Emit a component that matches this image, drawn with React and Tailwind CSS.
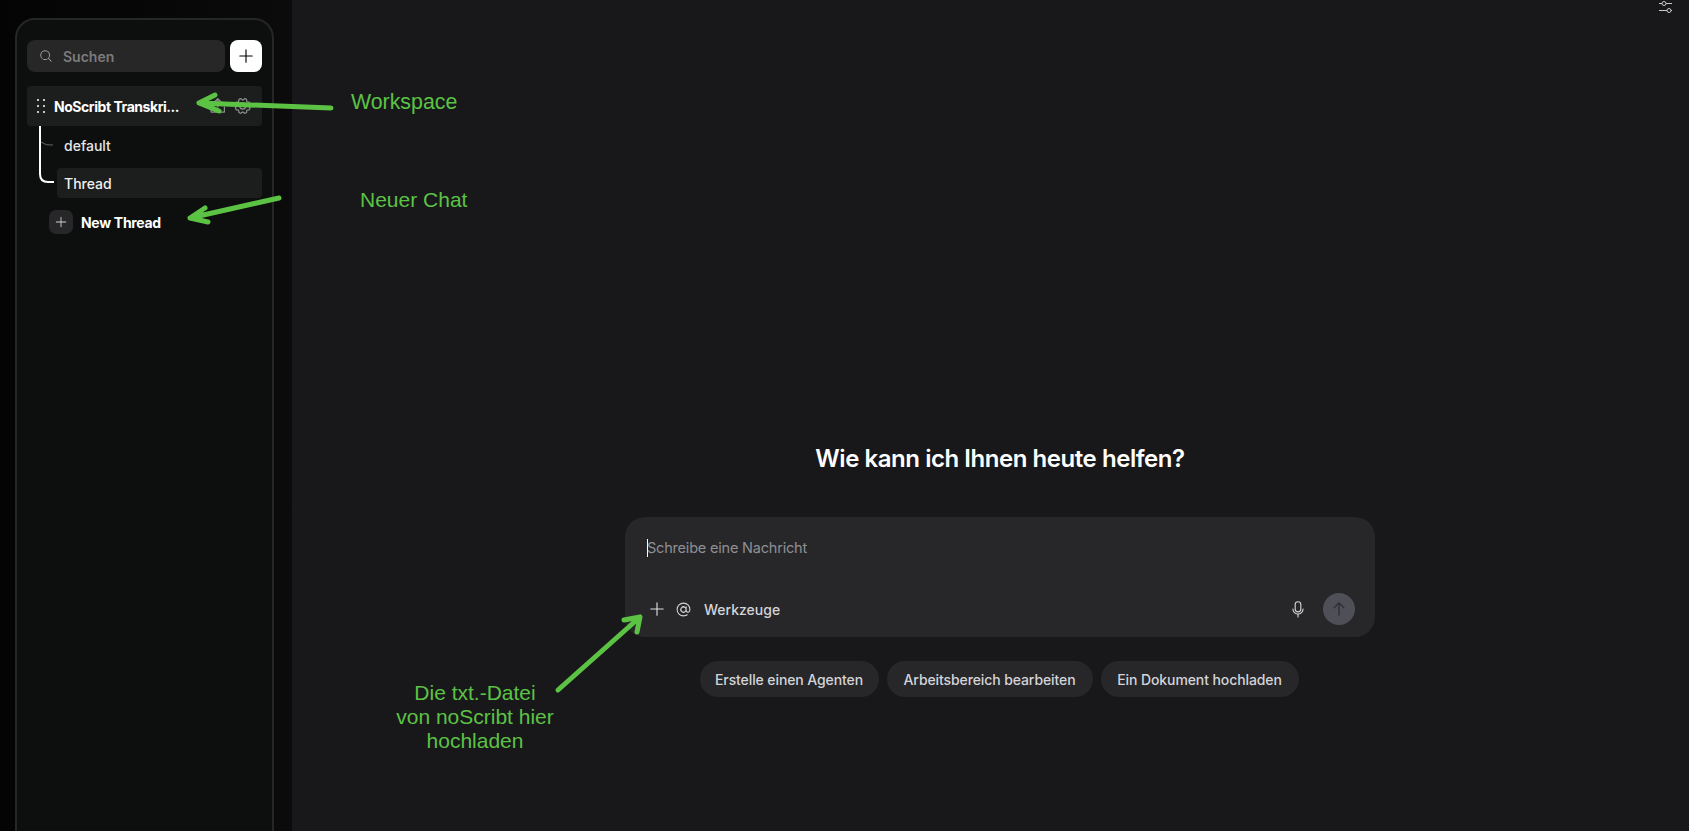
import React from "react";
import {
  PiMagnifyingGlass,
  PiPlus,
  PiUploadSimple,
  PiGear,
  PiAt,
  PiMicrophone,
  PiArrowUp,
} from "react-icons/pi";

const font = "font-['Inter','Noto_Sans',sans-serif]";

function Grip() {
  return (
    <div className="grid grid-cols-2 gap-x-[4px] gap-y-[4px] w-[8px] shrink-0">
      {[0, 1, 2, 3, 4, 5].map((i) => (
        <span key={i} className="w-[2px] h-[2px] bg-white rounded-full" />
      ))}
    </div>
  );
}

function Sliders() {
  return (
    <svg width="14" height="14" viewBox="0 0 14 14" fill="none" stroke="#c9c9cc" strokeWidth="1">
      <path d="M0 3.5h3M7 3.5h6M0 10.5h8M12 10.5h1" />
      <circle cx="5" cy="3.5" r="2" />
      <circle cx="10" cy="10.5" r="2" />
    </svg>
  );
}

function Sidebar() {
  return (
    <aside className="w-[292px] shrink-0 h-full bg-gradient-to-r from-[#040404] to-[#0b0b0b] pl-[15px] pr-[18px] pt-[18px]">
      <div className="h-[900px] rounded-[20px] border-2 border-[#252726] bg-[#0c0f0e] pt-[20px] px-[10px]">
        <div className="flex gap-[5px]">
          <div className="flex-1 h-[32px] rounded-[8px] bg-[#272727] flex items-center pl-[12px] gap-[10px]">
            <PiMagnifyingGlass className="text-[#a3a3a3] text-[14px]" />
            <span className="text-[14px] font-semibold text-[#7c7c7c]">Suchen</span>
          </div>
          <div className="w-[32px] h-[32px] rounded-[8px] bg-white flex items-center justify-center">
            <PiPlus className="text-black text-[18px]" />
          </div>
        </div>

        <div className="mt-[14px] h-[40px] rounded-[4px] bg-[#1c1e1d] flex items-center pl-[10px] pr-[10px]">
          <Grip />
          <span className="ml-[9px] text-[14px] font-bold text-white tracking-[-0.45px] w-[132px] whitespace-nowrap">NoScribt Transkri...</span>
          <PiUploadSimple className="ml-[26px] text-[#8f8f8f] text-[20px]" />
          <PiGear className="ml-[5px] text-[#8f8f8f] text-[20px]" />
        </div>

        <div className="relative">
          <svg className="absolute left-[12px] top-0" width="20" height="60" viewBox="0 0 20 60" fill="none">
            <path d="M1 0v48q0 8 8 8h6" stroke="#fff" strokeWidth="2" />
            <path d="M2 16q5 4 12 3" stroke="#666" strokeWidth="1" />
          </svg>
          <div className="ml-[30px] h-[42px] flex items-center pl-[7px] pb-[4px] text-[14px] font-medium text-[#e6e6e6]">default</div>
          <div className="ml-[30px] h-[30px] rounded-[4px] bg-[#1c1e1d] flex items-center pl-[7px] text-[14px] font-medium text-[#f0f0f0]">Thread</div>
        </div>

        <div className="mt-[12px] ml-[22px] flex items-center gap-[8px]">
          <div className="w-[24px] h-[24px] rounded-[7px] bg-[#272729] flex items-center justify-center">
            <PiPlus className="text-[#d4d4d4] text-[14px]" />
          </div>
          <span className="text-[14px] font-bold text-white tracking-[-0.3px]">New Thread</span>
        </div>
      </div>
    </aside>
  );
}

function Chip({ width, children }) {
  return (
    <div className={`h-[36px] ${width} rounded-full bg-[#27272a] flex items-center justify-center text-[14px] font-medium text-[#d4d4d8] tracking-[-0.1px] whitespace-nowrap`}>
      {children}
    </div>
  );
}

function Main() {
  return (
    <main className="flex-1 h-full bg-[#18181b] flex flex-col">
      <div className="h-[14px] flex justify-end pr-[16px] overflow-hidden">
        <Sliders />
      </div>
      <div className="flex flex-col items-center pt-[429px] pl-[19px]">
        <h1 className="text-[24px] leading-[32px] font-semibold text-white tracking-[-0.45px]">Wie kann ich Ihnen heute helfen?</h1>
        <div className="mt-[42px] w-[750px] h-[120px] rounded-[20px] bg-[#27272a] pl-[22px] pr-[20px] pt-[21px] flex flex-col">
          <div className="flex items-center h-[20px] text-[14.5px] text-[#8f8f94] tracking-[-0.2px]">
            <span className="w-px h-[18px] bg-white -mr-px" />
            Schreibe eine Nachricht
          </div>
          <div className="mt-[35px] flex items-center h-[32px]">
            <PiPlus className="ml-px text-[#e0e0e0] text-[18px]" />
            <PiAt className="ml-[9px] text-[#d4d4d8] text-[17px]" />
            <span className="ml-[12px] text-[14px] font-medium text-[#d4d4d8] tracking-[0px]">Werkzeuge</span>
            <PiMicrophone className="ml-auto text-[#d4d4d8] text-[18px]" />
            <div className="ml-[16px] w-[32px] h-[32px] rounded-full bg-[#4f4f58] flex items-center justify-center">
              <PiArrowUp className="text-[#2a2a2e] text-[18px]" />
            </div>
          </div>
        </div>
        <div className="mt-[24px] mr-[2px] flex gap-[8px]">
          <Chip width="w-[179px]">Erstelle einen Agenten</Chip>
          <Chip width="w-[206px]">Arbeitsbereich bearbeiten</Chip>
          <Chip width="w-[198px]">Ein Dokument hochladen</Chip>
        </div>
      </div>
    </main>
  );
}

function Annotations() {
  const green = "#5cc244";
  return (
    <>
      <svg className="absolute inset-0 pointer-events-none" width="1689" height="831" fill="none" stroke={green} strokeWidth="5" strokeLinecap="round" strokeLinejoin="round">
        <path d="M331 108L199 103M215 95L199 103L219 111" />
        <path d="M279 198L190 218M205 208L190 218L208 222" />
        <path d="M558 690L640 617M624 620L640 617L637 632" />
      </svg>
      <div className="absolute left-[351px] top-[90px] text-[21.33px] leading-[24px] text-[#5cc244] font-['Liberation_Sans',sans-serif]">Workspace</div>
      <div className="absolute left-[360px] top-[188px] text-[21px] leading-[24px] text-[#5cc244] font-['Liberation_Sans',sans-serif]">Neuer Chat</div>
      <div className="absolute left-[375px] top-[681px] w-[200px] text-center text-[21px] leading-[24px] text-[#5cc244] font-['Liberation_Sans',sans-serif]">
        Die txt.-Datei
        <br />
        von noScribt hier
        <br />
        hochladen
      </div>
    </>
  );
}

export default function App() {
  return (
    <div className={`relative h-screen w-full overflow-hidden flex ${font}`}>
      <Sidebar />
      <Main />
      <Annotations />
    </div>
  );
}
